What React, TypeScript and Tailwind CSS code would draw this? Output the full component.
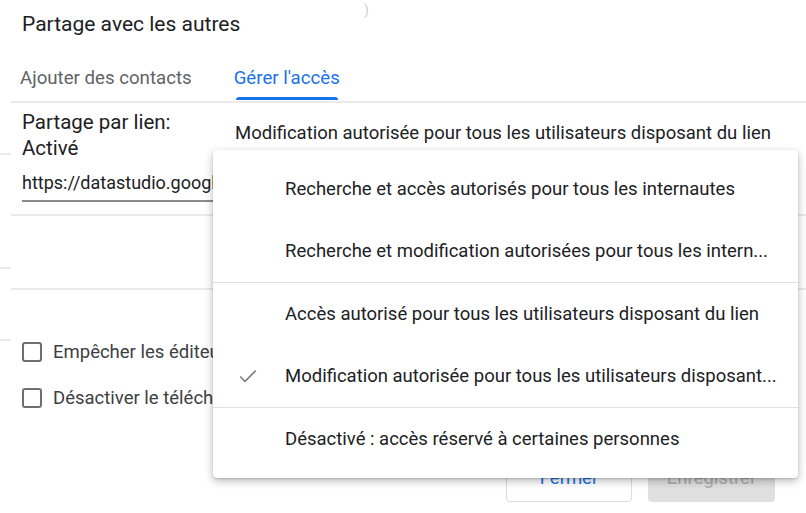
import { useState } from "react";

const menuGroups = [
  [
    { label: "Recherche et accès autorisés pour tous les internautes" },
    { label: "Recherche et modification autorisées pour tous les intern..." },
  ],
  [
    { label: "Accès autorisé pour tous les utilisateurs disposant du lien" },
    { label: "Modification autorisée pour tous les utilisateurs disposant...", checked: true },
  ],
  [{ label: "Désactivé : accès réservé à certaines personnes" }],
];

function CheckIcon() {
  return (
    <svg width="24" height="24" viewBox="0 0 24 24" fill="#7a7a7a">
      <path d="M9 16.17L4.83 12l-1.1 1.1L9 18.4 20.3 7.1l-1.1-1.1z" />
    </svg>
  );
}

function Checkbox({ label }: { label: string }) {
  return (
    <label className="flex items-center h-[20px] gap-[11px] whitespace-nowrap">
      <span className="w-[20px] h-[20px] border-2 border-[#6f6f6f] rounded-[3px] shrink-0" />
      <span className="text-[18.5px] leading-[24px] text-[#3c4043]">{label}</span>
    </label>
  );
}

export default function App() {
  const [tab] = useState(1);

  return (
    <div className="relative w-[806px] h-[513px] overflow-hidden bg-white text-[#202124] font-['Roboto','Liberation_Sans',sans-serif]">
      <div className="flex h-full">
        {/* strip of the page behind the dialog */}
        <div className="w-[11px] shrink-0">
          <div className="h-[155px] border-b-2 border-[#e8eaed]" />
          <div className="h-[114px] border-b-2 border-[#e8eaed]" />
          <div className="h-[72px] border-b-2 border-[#e8eaed]" />
        </div>

        <div className="flex-1 flex flex-col min-w-0">
          <div className="h-[50px] pt-[11px] pl-[11px]">
            <h2 className="text-[21px] leading-[26px]">Partage avec les autres</h2>
          </div>

          <div className="h-[51px] pt-[16px] pl-[9px] flex gap-[42px]">
            {["Ajouter des contacts", "Gérer l'accès"].map((t, i) => (
              <div key={t} className="flex flex-col">
                <span className={`text-[18.67px] leading-[24px] whitespace-nowrap ${i === tab ? "text-[#1a73e8]" : "text-[#5f6368]"}`}>{t}</span>
                <span className={`mt-[7px] h-[3px] mx-[2px] rounded-t-[3px] ${i === tab ? "bg-[#1a73e8]" : "bg-transparent"}`} />
              </div>
            ))}
          </div>
          <div className="h-[2px] bg-[#e8eaed]" />

          <div className="h-[111px] flex">
            <div className="w-[202px] shrink-0 pl-[11px] pt-[6px] overflow-hidden">
              <p className="text-[20.5px] leading-[26px]">Partage par lien:</p>
              <p className="text-[20.5px] leading-[26px]">Activé</p>
              <div className="mt-[10px] pb-[5px] border-b-2 border-[#8a8a8a] w-[260px]">
                <span className="text-[18px] leading-[24px] whitespace-nowrap block">https://datastudio.google.com/</span>
              </div>
            </div>
            <div className="pl-[22px] pt-[18px] whitespace-nowrap">
              <span className="text-[18.5px] leading-[24px]">Modification autorisée pour tous les utilisateurs disposant du lien</span>
            </div>
          </div>
          <div className="h-[2px] bg-[#e8eaed]" />
          <div className="h-[72px]" />
          <div className="h-[2px] bg-[#e8eaed]" />

          <div className="pl-[11px] pt-[52px] flex flex-col gap-[26px]">
            <Checkbox label="Empêcher les éditeurs de modifier l'accès" />
            <Checkbox label="Désactiver le téléchargement" />
          </div>

          <div className="mt-[54px] flex justify-end gap-[16px] pr-[31px]">
            <button className="w-[126px] h-[40px] pb-[6px] rounded-[4px] border border-[#dadce0] text-[18.5px] text-[#1a73e8]">Fermer</button>
            <button className="w-[127px] h-[40px] pb-[6px] rounded-[4px] bg-[#e0e0e0] text-[18.5px] text-[#ababab]">Enregistrer</button>
          </div>
        </div>
      </div>

      <span className="absolute left-[364px] top-[1px] text-[14px] leading-[18px] text-[#d0d0d0]">)</span>

      {/* open dropdown menu */}
      <div className="absolute left-[213px] top-[150px] w-[585px] py-[8px] bg-white rounded-[4px] shadow-[0_3px_8px_rgba(0,0,0,0.28),0_1px_2px_rgba(0,0,0,0.12)]">
        {menuGroups.map((group, gi) => (
          <div key={gi} className={gi > 0 ? "border-t border-[#e0e0e0]" : ""}>
            {group.map((item) => (
              <div key={item.label} className="flex items-center h-[62px] whitespace-nowrap">
                <div className="w-[72px] shrink-0 pl-[23px] flex items-center">
                  {item.checked && <CheckIcon />}
                </div>
                <span className="text-[18.5px] leading-[24px] text-[#202124]">{item.label}</span>
              </div>
            ))}
          </div>
        ))}
      </div>
    </div>
  );
}
